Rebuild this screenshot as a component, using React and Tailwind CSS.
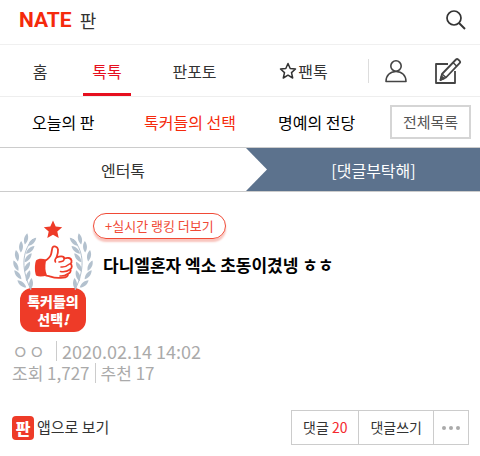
import clsx from 'clsx';

const LEAVES = [
  { x: 20, y: 22, r: 45 },
  { x: 18, y: 30, r: 48 },
  { x: 16, y: 38, r: 38 },
  { x: 15, y: 47, r: 30 },
  { x: 16, y: 56, r: 18 },
  { x: 19, y: 64, r: 5 },
  { x: 14, y: 19, r: 12 },
  { x: 9, y: 27, r: 2 },
  { x: 5, y: 36, r: -10 },
  { x: 4, y: 46, r: -25 },
  { x: 6, y: 55, r: -38 },
  { x: 10, y: 64, r: -50 },
];

const Laurel = () => (
  <>
    <path d="M21 19C12 29 7 45 19 70" fill="none" stroke="#b3c1ce" strokeWidth="1" />
    {LEAVES.map((leaf) => (
      <path
        key={`${leaf.x}-${leaf.y}`}
        d="M0-6C2.600-2.500 2.600 2 0 5.500-2.600 2-2.600-2.500 0-6z"
        transform={`translate(${leaf.x} ${leaf.y}) rotate(${leaf.r})`}
      />
    ))}
  </>
);

const PickBadge = () => (
  <div className="w-[82px] shrink-0">
    <svg viewBox="0 0 82 72" className="block w-full" aria-hidden="true">
      <path fill="#ee3b28" d="M41 0.5l2.700 6 6.500.7-4.900 4.300 1.400 6.500-5.700-3.300-5.700 3.300 1.400-6.500-4.900-4.300 6.500-.7z" />
      <g fill="#b3c1ce">
        <Laurel />
        <g transform="translate(82 0) scale(-1 1)">
          <Laurel />
        </g>
      </g>
      <path fill="#ee3b28" d="M34 39.500c-4-1-8-1-10 1-1.500 4-1.500 11 0 15 3 1.500 7 1 11 0z" />
      <path
        fill="#fff"
        stroke="#ee3b28"
        strokeWidth="1.800"
        strokeLinecap="round"
        strokeLinejoin="round"
        d="M33 41c3-2 5-3.500 6-6.500.8-2.500.8-5 1.500-7 1.500-2 5-1 5.500 2 .3 2.500-.6 5.500-1.500 8 3-1.500 7.500-2 8 1 3-1.200 6.500-.8 7 2 .3 1.600-.3 2.700-1 3.300 1.700 1.200 1.700 4-.1 5.300.8 2-.2 4-2.200 4.500-.3 2.700-2.400 4-5 4-5 .6-9.500.2-12.500-1-2-.6-3-1-4.500-1-2-4-2-10-1.200-14.600z"
      />
      <path
        fill="none"
        stroke="#ee3b28"
        strokeWidth="1.600"
        strokeLinecap="round"
        d="M44.500 37.500c-1.500 1.500-2 3-1 4.500M52 38.500c.5 2-.8 3.200-5 3.500M49 47c3 .3 6-.8 8.500-3M48.500 51.500c3.500.6 7-.1 9.500-2M48 56c3 .3 5.500-.5 7.500-2"
      />
    </svg>
    <div className="-mt-1 mx-2 rounded-xl bg-[#ee3b28] py-1 text-center text-sm leading-[18px] font-black text-white">
      톡커들의
      <br />
      선택<i>!</i>
    </div>
  </div>
);

const SearchIcon = () => (
  <svg viewBox="0 0 20 20" className="size-5" fill="none" stroke="#333" strokeWidth="1.700">
    <circle cx="8" cy="8" r="7" />
    <path d="M13 13l6 6" strokeWidth="2" />
  </svg>
);

const StarIcon = () => (
  <svg viewBox="0 0 18 18" className="size-[18px]" fill="none" stroke="#333" strokeWidth="1.500" strokeLinejoin="round">
    <path d="M9 1.500l2.200 5 5.300.5-4 3.600 1.200 5.400L9 13.200 4.300 16l1.200-5.400-4-3.600 5.300-.5z" />
  </svg>
);

const PersonIcon = () => (
  <svg viewBox="0 0 22 24" className="h-6 w-[22px]" fill="none" stroke="#444" strokeWidth="1.600" strokeLinejoin="round">
    <circle cx="11" cy="7" r="5.200" />
    <path d="M1 22.500c0-6 4-10 10-10s10 4 10 10z" />
  </svg>
);

const WriteIcon = () => (
  <svg viewBox="0 0 28 28" className="size-7" fill="none" stroke="#444" strokeWidth="1.800" strokeLinejoin="round">
    <path d="M14 7H2v19h19V14" />
    <path d="M22 2.500c.8-.8 1.400-.8 2.200 0l1.400 1.300c.8.8.8 1.500 0 2.300L12 20.500 6.500 23 8 17z" />
    <path d="M19 5.500l4 4M8 17l4 3.500" strokeWidth="1.500" />
    <path d="M7.500 19.500l2.500 2L6.500 23z" fill="#444" />
  </svg>
);

const subMenu = [
  { label: '오늘의 판' },
  { label: '톡커들의 선택', active: true },
  { label: '명예의 전당' },
];

const App = () => {
  return (
    <div className="bg-white font-['Noto_Sans_CJK_KR',sans-serif] text-[#333]">
      <header className="flex h-[45px] items-center justify-between border-b border-[#f0f0f0] pr-[14px] pb-1 pl-[19px]">
        <a href="#" className="flex items-center gap-2">
          <span className="font-[Roboto,sans-serif] text-[21px] leading-6 font-bold text-[#f52a0c]">NATE</span>
          <span className="text-lg leading-6">판</span>
        </a>
        <button type="button" aria-label="검색">
          <SearchIcon />
        </button>
      </header>

      <nav className="grid h-[52px] grid-cols-[80fr_54fr_121fr_97fr_16fr_112fr] items-stretch border-b border-[#eee] text-base">
        <a href="#" className="flex items-center justify-center">홈</a>
        <a href="#" className="mx-[3px] flex items-center justify-center border-b-3 border-[#e60f1e] pt-[3px] text-[#e60f1e]">톡톡</a>
        <a href="#" className="flex items-center justify-center">판포토</a>
        <a href="#" className="flex items-center justify-center gap-px">
          <StarIcon />
          팬톡
        </a>
        <span />
        <div className="my-auto flex items-center justify-between pr-[18px]">
          <span className="h-6 w-px bg-[#ddd]" />
          <a href="#" aria-label="내 정보" className="mr-3"><PersonIcon /></a>
          <a href="#" aria-label="글쓰기"><WriteIcon /></a>
        </div>
      </nav>

      <nav className="grid h-[50px] grid-cols-[1fr_1fr_1fr_100px] items-center text-center text-base text-black">
        {subMenu.map((item) => (
          <a key={item.label} href="#" className={clsx(item.active && 'text-[#f52a0c]')}>
            {item.label}
          </a>
        ))}
        <a href="#" className="mr-[9px] ml-[10px] border-2 border-[#d5d5d5] py-1 text-[15px] leading-[22px] text-[#555]">
          전체목록
        </a>
      </nav>

      <nav className="grid h-[45px] grid-cols-[246fr_234fr] border-y border-[#ccc] text-base">
        <a href="#" className="flex items-center justify-center">엔터톡</a>
        <a href="#" className="flex items-center bg-[#5c728d] text-white">
          <svg viewBox="0 0 21 43" preserveAspectRatio="none" className="h-full w-[21px]" aria-hidden="true">
            <path d="M0 0L21 21.500 0 43z" fill="#fff" />
          </svg>
          <span className="flex-1 text-center">[댓글부탁해]</span>
        </a>
      </nav>

      <main className="px-3 pt-5">
        <div className="flex">
          <div className="pt-2">
            <PickBadge />
          </div>
          <div className="-ml-px">
            <a
              href="#"
              className="inline-block rounded-full border border-[#f04a36] px-[11px] text-[13px] leading-6 text-[#f04a36] shadow-[0_3px_2px_#f9c4bd]"
            >
              +실시간 랭킹 더보기
            </a>
            <h1 className="pt-[14px] pl-[10px] text-[17px] leading-6 font-bold text-black">
              다니엘혼자 엑소 초동이겼넹 ㅎㅎ
            </h1>
          </div>
        </div>

        <div className="pt-2 text-lg leading-[22px] text-[#aaa]">
          <p className="flex items-center">
            <span className="w-11">ㅇㅇ</span>
            <span className="mr-[5px] h-5 w-px bg-[#ccc]" />
            2020.02.14 14:02
          </p>
          <p className="flex items-center gap-[5px] text-[17px]">
            조회 1,727
            <span className="h-5 w-px bg-[#ccc]" />
            추천 17
          </p>
        </div>

        <div className="flex items-center justify-between pt-[26px]">
          <a href="#" className="flex items-center gap-[3px] text-[15px]">
            <span className="flex h-6 w-[22px] items-center justify-center rounded bg-[#ee3b28] text-base leading-6 font-black text-white">
              판
            </span>
            앱으로 보기
          </a>
          <div className="-mr-px flex divide-x divide-[#ccc] border border-[#ccc] text-sm leading-[33px]">
            <button type="button" className="px-[11px]">
              댓글 <span className="text-[#f4282d]">20</span>
            </button>
            <button type="button" className="px-[11px]">댓글쓰기</button>
            <button type="button" aria-label="더보기" className="flex items-center gap-[3px] px-2">
              <span className="size-1 rounded-full bg-[#aaa]" />
              <span className="size-1 rounded-full bg-[#aaa]" />
              <span className="size-1 rounded-full bg-[#aaa]" />
            </button>
          </div>
        </div>
      </main>
    </div>
  );
};

export default App;
